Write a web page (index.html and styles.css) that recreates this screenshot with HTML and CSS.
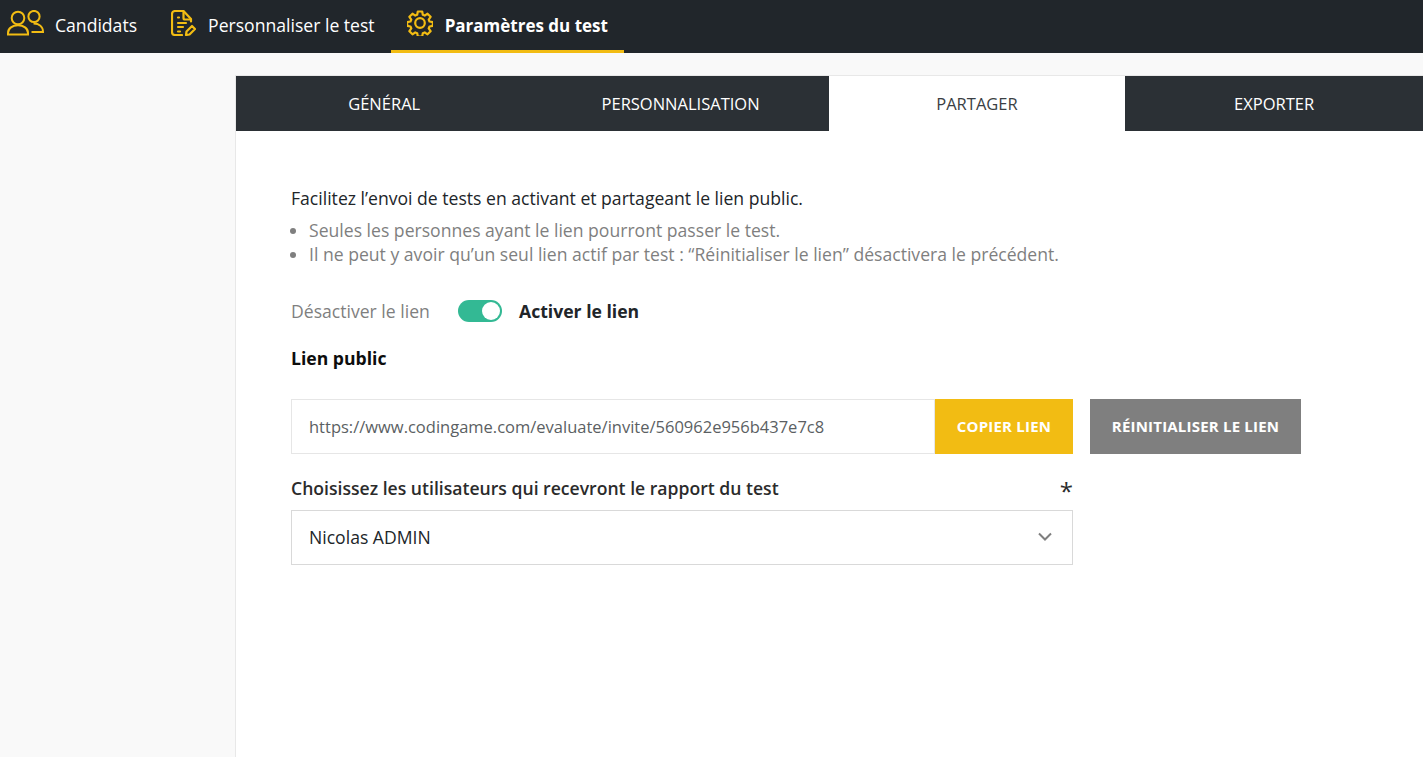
FILE: index.html
```html
<!DOCTYPE html>
<html lang="fr">
<head>
<meta charset="utf-8">
<title>Paramètres du test</title>
<link rel="stylesheet" href="styles.css">
</head>
<body>
<header class="topbar">
  <a class="nav-item nav-first">
    <svg class="nav-icon icon-users" viewBox="0 0 38 26" fill="none" stroke="#f2bc13" stroke-width="2"><circle cx="11" cy="8" r="6.300"/><path d="M1 24.500v-1.500c0-4.700 4.500-7.800 10-7.800s10 3.100 10 7.800v1.500z"/><circle cx="27" cy="6.500" r="5.600"/><path d="M26.500 13.500c5.500 0 9.500 3 9.500 8.500H24.500"/></svg>
    <span>Candidats</span>
  </a>
  <a class="nav-item nav-second">
    <svg class="nav-icon icon-doc" viewBox="0 0 25 26" fill="none" stroke="#f2bc13" stroke-width="2.200" stroke-linecap="round" stroke-linejoin="round"><path d="M11 25H4a3 3 0 0 1-3-3V4a3 3 0 0 1 3-3h8.500l7.500 8v2.500"/><path d="M12.500 1.500V8a1.500 1.500 0 0 0 1.500 1.500h5.500"/><path d="M7 7.500h1M7 13h8M7 17h5M7 21.500h2"/><path d="M15 25l.5-3.500 5.500-5.500 3 3-5.500 5.500z"/></svg>
    <span>Personnaliser le test</span>
  </a>
  <a class="nav-item nav-active">
    <svg class="nav-icon icon-gear" viewBox="0 0 26 26" fill="none" stroke="#f2bc13" stroke-width="2.200" stroke-linejoin="round"><path d="M10.800 1.500h4.400l.6 3.300 1.900.8 2.800-1.900 3.100 3.100-1.900 2.800.8 1.900 3.300.6v3.800l-3.300.6-.8 1.900 1.900 2.800-3.100 3.100-2.800-1.900-1.900.8-.6 3.300h-4.400l-.6-3.300-1.900-.8-2.800 1.900-3.100-3.100 1.900-2.800-.8-1.900-3.300-.6v-3.800l3.300-.6.800-1.900-1.900-2.800 3.100-3.100 2.800 1.900 1.900-.8z"/><circle cx="13" cy="13" r="4.800"/></svg>
    <span>Paramètres du test</span>
  </a>
</header>
<main class="panel">
  <nav class="tabs">
    <a class="tab">GÉNÉRAL</a>
    <a class="tab">PERSONNALISATION</a>
    <a class="tab tab-active">PARTAGER</a>
    <a class="tab">EXPORTER</a>
  </nav>
  <section class="content">
    <p class="intro">Facilitez l’envoi de tests en activant et partageant le lien public.</p>
    <ul class="notes">
      <li>Seules les personnes ayant le lien pourront passer le test.</li>
      <li>Il ne peut y avoir qu’un seul lien actif par test : “Réinitialiser le lien” désactivera le précédent.</li>
    </ul>
    <div class="switch-row">
      <span class="switch-off">Désactiver le lien</span>
      <span class="switch"><span class="knob"></span></span>
      <strong class="switch-on">Activer le lien</strong>
    </div>
    <h2 class="link-title">Lien public</h2>
    <div class="link-row">
      <div class="link-field">https://www.codingame.com/evaluate/invite/560962e956b437e7c8</div>
      <button class="btn btn-copy">COPIER LIEN</button>
      <button class="btn btn-reset">RÉINITIALISER LE LIEN</button>
    </div>
    <div class="select-block">
      <div class="select-label"><span>Choisissez les utilisateurs qui recevront le rapport du test</span><span class="req">*</span></div>
      <div class="select">
        <span>Nicolas ADMIN</span>
        <svg class="chevron" viewBox="0 0 14 9" fill="none" stroke="#7f7f7f" stroke-width="2"><path d="M1 1.500l6 6 6-6"/></svg>
      </div>
    </div>
  </section>
</main>
</body>
</html>
```
FILE: styles.css
```css
* { box-sizing: border-box; }
html, body { height: 100%; }
body {
  margin: 0;
  background: #f9f9f9;
  font-family: "Open Sans", sans-serif;
  font-size: 17.6px;
  color: #212529;
  overflow: hidden;
}
.topbar {
  display: flex;
  height: 53px;
  background: #21262b;
  color: #fff;
}
.nav-item {
  display: flex;
  align-items: center;
  gap: 12px;
  padding: 0 16px;
  height: 53px;
  font-size: 17.6px;
  border-bottom: 3px solid transparent;
}
.nav-first { padding-left: 7px; padding-right: 18px; gap: 10px; }
.nav-second { gap: 12px; }
.nav-active {
  font-weight: 700;
  font-size: 17px;
  border-bottom-color: #f2bc13;
}
.nav-icon { display: block; flex: none; margin-bottom: 4px; }
.icon-users { width: 38px; height: 26px; }
.icon-doc { width: 25px; height: 26px; }
.icon-gear { width: 26px; height: 26px; }
.panel {
  margin: 22px 0 0 235px;
  height: calc(100vh - 75px);
  background: #fff;
  border-left: 1px solid #e8e8e8;
  border-top: 1px solid #e8e8e8;
}
.tabs {
  display: grid;
  grid-template-columns: repeat(3, 296.4px) 1fr;
  height: 55px;
}
.tab {
  display: flex;
  align-items: center;
  justify-content: center;
  background: #2b3035;
  color: #fff;
  font-size: 16.5px;
}
.tab-active { background: #fff; color: #3a3f44; }
.content { padding: 55px 55px 0; }
.intro { margin: 0; line-height: 24px; height: 24px; }
.notes {
  margin: 8px 0 0;
  padding: 0 0 0 18px;
  color: #7f7f7f;
  line-height: 24px;
}
.switch-row {
  display: flex;
  align-items: center;
  margin-top: 33px;
  height: 24px;
}
.switch-off { color: #7f7f7f; width: 167px; }
.switch {
  display: flex;
  justify-content: flex-end;
  align-items: center;
  width: 44px;
  height: 22px;
  padding: 2px;
  border-radius: 11px;
  background: #33b994;
  margin-right: 17px;
}
.knob { width: 18px; height: 18px; border-radius: 50%; background: #fff; }
.switch-on { font-weight: 700; }
.link-title {
  margin: 23px 0 0;
  font-size: 17.6px;
  line-height: 24px;
  font-weight: 700;
  color: #0d0d0d;
}
.link-row { display: flex; margin-top: 29px; height: 55px; }
.link-field {
  display: flex;
  align-items: center;
  width: 644px;
  padding-left: 17px;
  border: 1px solid #e6e6e6;
  font-size: 16.5px;
  color: #5b5f63;
  background: #fff;
}
.btn {
  border: 0;
  font-family: inherit;
  font-size: 15px;
  font-weight: 700;
  letter-spacing: .2px;
  color: #fff;
  padding: 0 0 2px;
}
.btn-copy { width: 138px; background: #f2bc13; }
.btn-reset { width: 211px; margin-left: 17px; background: #7f7f7f; }
.select-block { width: 782px; margin-top: 22px; }
.select-label {
  display: flex;
  justify-content: space-between;
  line-height: 24px;
  font-weight: 600;
  color: #2b2b2b;
}
.req { font-weight: 400; font-size: 24px; line-height: 30px; height: 24px; }
.select {
  display: flex;
  align-items: center;
  justify-content: space-between;
  height: 55px;
  margin-top: 10px;
  padding: 0 20px 2px 17px;
  border: 1px solid #d9d9d9;
  color: #212529;
}
.chevron { width: 14px; height: 9px; display: block; }
```
